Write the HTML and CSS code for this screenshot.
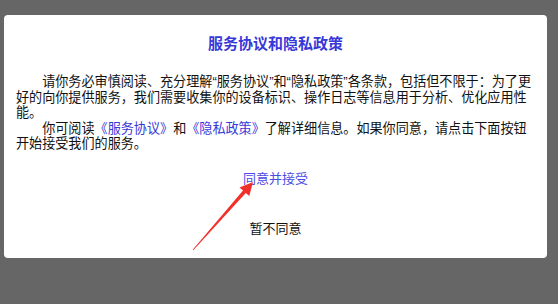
FILE: index.html
```html
<!DOCTYPE html>
<html lang="zh-CN">
<head>
<meta charset="utf-8">
<title>服务协议和隐私政策</title>
<link rel="stylesheet" href="styles.css">
</head>
<body>
<div class="screen">
  <div class="dialog">
    <h1 class="title">服务协议和隐私政策</h1>
    <div class="content">
      <p class="para">请你务必审慎阅读、充分理解“服务协议”和“隐私政策”各条款，包括但不限于：为了更好的向你提供服务，我们需要收集你的设备标识、操作日志等信息用于分析、优化应用性能。</p>
      <p class="para">你可阅读<a class="link">《服务协议》</a>和<a class="link">《隐私政策》</a>了解详细信息。如果你同意，请点击下面按钮开始接受我们的服务。</p>
    </div>
    <div class="actions">
      <div class="btn btn-accept">同意并接受</div>
      <div class="btn btn-reject">暂不同意</div>
    </div>
  </div>
  <svg class="arrow" width="558" height="304" viewBox="0 0 558 304">
    <polygon fill="#f2302b" points="193.3,250.3 245.8,192.9 249.3,196.0 253,182 239.5,187.5 243.0,190.6 192.7,249.7"/>
  </svg>
</div>
</body>
</html>
```

FILE: styles.css
```css
html, body {
  margin: 0;
  padding: 0;
}

body {
  background: #666666;
  width: 558px;
  height: 304px;
  overflow: hidden;
  font-family: "Liberation Sans", "Noto Sans CJK SC", sans-serif;
  color: #111111;
}

.screen {
  position: relative;
  width: 558px;
  height: 304px;
  padding: 15px 11px 0 4px;
  box-sizing: border-box;
}

.dialog {
  background: #ffffff;
  border-radius: 4px;
  height: 243px;
  box-sizing: border-box;
  padding: 19px 12px 5px 12px;
  display: flex;
  flex-direction: column;
}

.title {
  margin: 0;
  font-size: 15px;
  font-weight: bold;
  line-height: 20px;
  text-align: center;
  color: #3838d8;
}

.content {
  margin-top: 20px;
}

.para {
  margin: 0;
  font-size: 13.1px;
  line-height: 15.5px;
  text-indent: 2em;
  color: #111111;
}

.link {
  color: #3838d8;
}

.actions {
  display: flex;
  flex-direction: column;
  margin-top: 1px;
}

.btn {
  height: 50px;
  display: flex;
  align-items: center;
  justify-content: center;
  font-size: 13px;
}

.btn-accept {
  color: #4b4be3;
}

.btn-reject {
  color: #111111;
}

.arrow {
  position: absolute;
  left: 0;
  top: 0;
  pointer-events: none;
}
```
